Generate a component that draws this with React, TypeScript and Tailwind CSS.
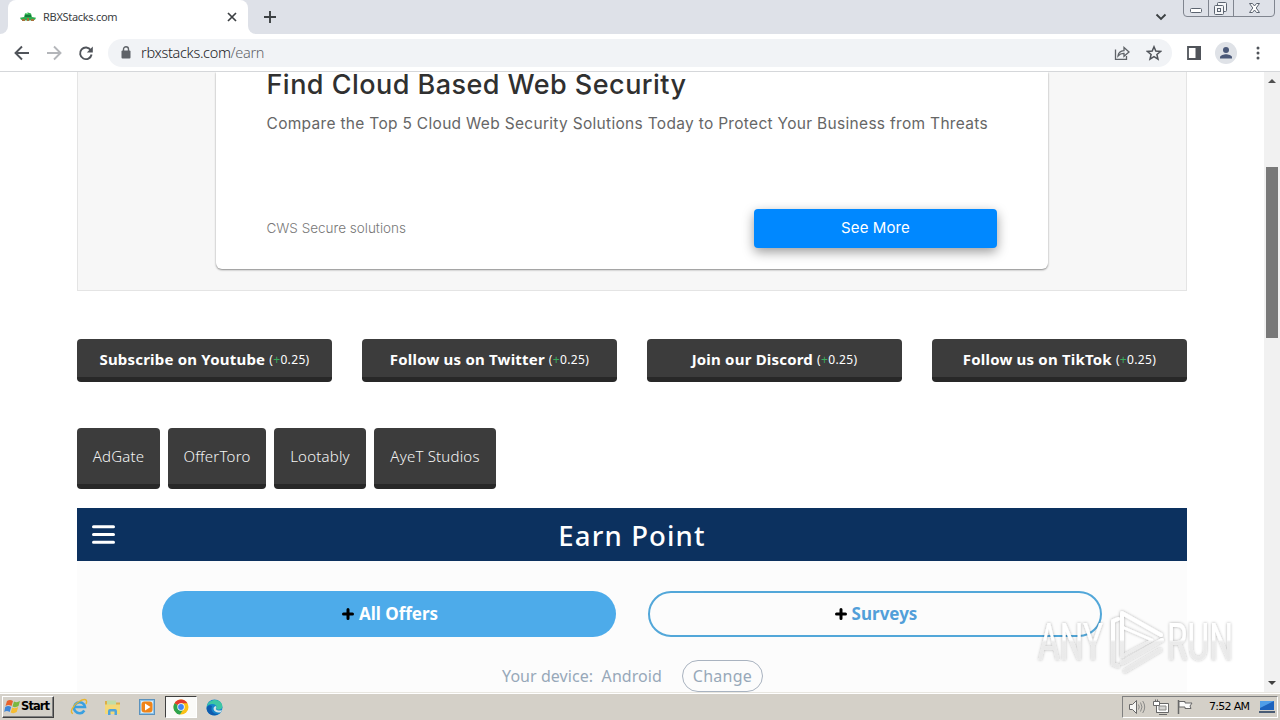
import React from "react";

const ui = "font-['Noto_Sans','Open_Sans',sans-serif]";

function TabStrip() {
  return (
    <div className="flex h-[34px] bg-[#dee1e8]">
      <div className="flex w-2 items-end bg-white">
        <div className="h-full w-full rounded-br-lg bg-[#dee1e8]" />
      </div>
      <div className="flex w-[240px] items-center rounded-t-lg bg-white pl-3 pr-[10px]">
        <svg width="16" height="10" viewBox="0 0 16 10">
          <path d="M4 5 5 1.500 8 .5l3 1L12 5l4 .8-1 2-7 1-7-1-1-2z" fill="#2fae4e" />
          <path d="M5 3h6v2H5z" fill="#137a3c" />
          <path d="M2 7h3v2H2zM7 6h2v3H7zM11 7h3v2h-3z" fill="#a8703c" />
          <path d="M6 1h2v1H6z" fill="#7ce08c" />
        </svg>
        <span className="ml-[7px] flex-1 whitespace-nowrap text-[11px] tracking-[-0.3px] text-[#3c4043]">RBXStacks.com</span>
        <svg width="12" height="12" viewBox="0 0 12 12" stroke="#3c4043" strokeWidth="1.7">
          <path d="M2 2l8 8M10 2l-8 8" />
        </svg>
      </div>
      <div className="w-2 bg-white">
        <div className="h-full w-full rounded-bl-lg bg-[#dee1e8]" />
      </div>
      <svg className="ml-2 mt-[11px]" width="12" height="12" viewBox="0 0 12 12" stroke="#3c4043" strokeWidth="1.9">
        <path d="M6 0v12M0 6h12" />
      </svg>
      <svg className="ml-auto mr-[15px] mt-[13px]" width="12" height="8" viewBox="0 0 12 8" fill="none" stroke="#3c4043" strokeWidth="1.9">
        <path d="M1.500 1.500 6 6l4.500-4.500" />
      </svg>
      <svg width="98" height="18" viewBox="0 0 98 18" fill="none" stroke="#80858f">
        <path d="M1.500 0v13q0 3.500 3.500 3.500h84q3.500 0 3.500-3.500V0M26.500 0v16M51.500 0v16" />
        <g stroke="#5c6470">
          <rect x="8.500" y="8.500" width="11" height="4" rx="1" fill="#fff" />
          <rect x="35.500" y="2.500" width="9" height="9" rx="1" fill="#f5f6f8" />
          <rect x="32.500" y="5.500" width="9" height="9" rx="1" fill="#f5f6f8" />
          <rect x="35.500" y="8.500" width="3" height="3" />
          <path d="M67.500 3.500h3l2 2.500 2-2.500h3L74.200 8l3.300 4.500h-3l-2-2.500-2 2.500h-3L70.800 8z" fill="#fff" />
        </g>
      </svg>
    </div>
  );
}

function Toolbar() {
  return (
    <div className="flex h-[38px] items-center border-b border-[#d5d7da] bg-white pl-[14px]">
      <svg width="80" height="16" viewBox="0 0 80 16" fill="none" strokeWidth="1.9">
        <path d="M15 8H2M8 1.500 1.500 8 8 14.500" stroke="#50545a" />
        <path d="M33 8h13M40 1.500 46.500 8 40 14.500" stroke="#b4b6ba" />
        <path d="M76.800 5.200A5.800 5.800 0 1 0 77.600 9.500" stroke="#50545a" />
        <path d="M78.800 1.500v6h-6z" fill="#50545a" />
      </svg>
      <div className="ml-[14px] flex h-[28px] w-[1064px] items-center rounded-full bg-[#f1f3f6] pl-[13px] pr-[10px]">
        <svg width="10" height="13" viewBox="0 0 10 13">
          <rect x="0.500" y="4.500" width="9" height="8" rx="1" fill="#5f6368" />
          <path d="M2.500 5V3.200a2.500 2.500 0 0 1 5 0V5" fill="none" stroke="#5f6368" strokeWidth="1.400" />
        </svg>
        <span className="ml-[10px] flex-1 whitespace-nowrap text-[14.500px] font-light tracking-[-0.32px] text-[#202124]">
          rbxstacks.com<span className="text-[#5f6368]">/earn</span>
        </span>
        <svg width="16" height="14" viewBox="0 0 16 14" fill="none" stroke="#5f6368" strokeWidth="1.300">
          <path d="M1.500 3.500v9.800h11V10" />
          <path d="M4 10q.5-5 6-5.400V1.500L15 6l-5 4.300V7.400Q6.500 7.200 4 10z" />
        </svg>
        <svg className="ml-4" width="16" height="16" viewBox="0 0 16 16" fill="none" stroke="#50545a" strokeWidth="1.500">
          <path d="m8 1.800 1.800 4.300 4.700.4-3.600 3 1.100 4.600L8 11.700 4 14.100l1.100-4.600-3.600-3 4.700-.4z" />
        </svg>
      </div>
      <svg className="ml-[15px]" width="14" height="14" viewBox="0 0 14 14">
        <path d="M1 1h12v12H1z" fill="none" stroke="#50545a" strokeWidth="1.800" />
        <path d="M8.500 0H14v14H8.500z" fill="#50545a" />
      </svg>
      <svg className="ml-[14px]" width="22" height="22" viewBox="0 0 22 22">
        <circle cx="11" cy="11" r="11" fill="#dfe2e7" />
        <circle cx="11" cy="8" r="3" fill="#4a5878" />
        <path d="M5 16.500v-1.300c0-2 4-3 6-3s6 1 6 3v1.300z" fill="#4a5878" />
      </svg>
      <svg className="ml-[19px]" width="4" height="14" viewBox="0 0 4 14" fill="#50545a">
        <circle cx="2" cy="2" r="1.500" />
        <circle cx="2" cy="7" r="1.500" />
        <circle cx="2" cy="12" r="1.500" />
      </svg>
    </div>
  );
}

function Ad() {
  return (
    <div className="flex h-[219px] justify-center border border-t-0 border-[#e4e4e4] bg-[#f7f7f7] pr-px">
      <div className="h-[197px] w-[832px] rounded-b-md bg-white px-[51px] font-['Inter',sans-serif] shadow-[0_1px_2px_rgba(0,0,0,0.45)]">
        <div className="h-[30px] whitespace-nowrap text-[27px] font-medium leading-[25px] tracking-[0.46px] text-[#303030]">Find Cloud Based Web Security</div>
        <div className="mt-3 h-5 whitespace-nowrap text-[15.500px] leading-5 tracking-[0.305px] text-[#666]">
          Compare the Top 5 Cloud Web Security Solutions Today to Protect Your Business from Threats
        </div>
        <div className="mt-[75px] flex h-[39px] items-center justify-between">
          <span className="text-[13.500px] font-light text-[#777]">CWS Secure solutions</span>
          <div className="flex h-[39px] w-[243px] items-center justify-center rounded bg-[#0088ff] text-[15px] tracking-[0.1px] text-white shadow-[0_4px_12px_rgba(0,0,0,0.4)]">
            <span className="ml-px">See More</span>
          </div>
        </div>
      </div>
    </div>
  );
}

function Social({ label }: { label: string }) {
  return (
    <div className="flex h-[43px] w-[255px] items-center justify-center whitespace-nowrap rounded border-b-[5px] border-[#282828] bg-[#3c3c3c] pt-[2px] text-[15px] font-bold text-white">
      <span className="tracking-[0.2px]">{label}</span>
      <span className="ml-1 mt-px text-[12px] font-normal tracking-[0.35px]">
        (<span className="text-[#3bab5c]">+</span>0.25)
      </span>
    </div>
  );
}

function Wall({ label, box }: { label: string; box: string }) {
  return (
    <div className={`flex h-[61px] items-center justify-center whitespace-nowrap rounded border-b-[5px] border-[#282828] bg-[#3c3c3c] text-[15px] font-light tracking-[0.2px] text-[#f4f4f4] ${box}`}>
      {label}
    </div>
  );
}

function Plus() {
  return (
    <svg className="mr-[5px]" width="12" height="12" viewBox="0 0 12 12" stroke="#000" strokeWidth="3" strokeLinecap="round">
      <path d="M6 1.500v9M1.500 6h9" />
    </svg>
  );
}

function OfferPanel() {
  return (
    <div className="mt-[19px] h-[184px] bg-[#fcfcfc]">
      <div className="flex h-[53px] items-center bg-[#0c315f] pl-[15px] pr-[38px]">
        <svg width="23" height="19" viewBox="0 0 23 19" stroke="#fff" strokeWidth="3" strokeLinecap="round">
          <path d="M1.500 1.700h20M1.500 9.500h20M1.500 17.300h20" />
        </svg>
        <span className="flex-1 pt-[2px] text-center text-[27.500px] font-medium tracking-[1.150px] text-white">Earn Point</span>
      </div>
      <div className="mt-[30px] flex justify-center gap-8 text-[17px] font-bold">
        <div className="flex h-[46px] w-[454px] items-center justify-center rounded-full bg-[#4dabea] pl-[2px] text-white">
          <Plus />
          <span>All Offers</span>
        </div>
        <div className="flex h-[46px] w-[454px] items-center justify-center rounded-full border-2 border-[#52a7d9] pl-[2px] text-[#529fd9]">
          <Plus />
          <span>Surveys</span>
        </div>
      </div>
      <div className="mt-[23px] flex items-center justify-center whitespace-nowrap pl-px text-[16px] text-[#97a8b9]">
        <span className="mr-5 tracking-[0.06px]">Your device:&nbsp; Android</span>
        <span className="flex h-8 w-[81px] items-center justify-center rounded-full border border-[#a9b3c0] tracking-[0.25px]">Change</span>
      </div>
    </div>
  );
}

function Scrollbar() {
  return (
    <div className="flex h-full w-4 flex-col items-center bg-[#f1f1f1]">
      <svg className="mt-[6px]" width="8" height="5" viewBox="0 0 8 5" fill="#505050">
        <path d="M0 5 4 1l4 4z" />
      </svg>
      <div className="mt-[84px] h-[171px] w-3 bg-[#797979]" />
      <svg className="mb-[6px] mt-auto" width="8" height="5" viewBox="0 0 8 5" fill="#404040">
        <path d="M0 0l4 4 4-4z" />
      </svg>
    </div>
  );
}

function Watermark() {
  return (
    <svg className="absolute left-[1030px] top-[604px]" width="210" height="76" viewBox="0 0 210 76">
      <defs>
        <linearGradient id="fade" x1="0" y1="0" x2="0" y2="76" gradientUnits="userSpaceOnUse">
          <stop offset="0" stopColor="#fff" />
          <stop offset="0.470" stopColor="#fff" />
          <stop offset="0.500" stopColor="#ededed" stopOpacity="0.850" />
          <stop offset="1" stopColor="#e9e9e9" stopOpacity="0.850" />
        </linearGradient>
        <filter id="halo" x="-10%" y="-10%" width="120%" height="120%">
          <feDropShadow dx="0" dy="0" stdDeviation="1.500" floodColor="#000" floodOpacity="0.330" />
        </filter>
      </defs>
      <g filter="url(#halo)" fill="url(#fade)" fontFamily="Roboto, sans-serif" fontSize="52">
        <text x="8" y="56" textLength="65" lengthAdjust="spacingAndGlyphs">ANY</text>
        <text x="137" y="56" textLength="66" lengthAdjust="spacingAndGlyphs">RUN</text>
        <g fill="none" stroke="url(#fade)" strokeWidth="4" strokeLinejoin="round" strokeLinecap="round">
          <path d="M92 52V9l39 22" />
          <path d="M92 23v29l30-16z" strokeWidth="2.500" />
          <path d="M88 15l-5 2v43l5 2M132 36 92 59" />
          <path d="M95 67l35-21" />
        </g>
      </g>
    </svg>
  );
}

function Taskbar() {
  return (
    <div className="flex h-7 items-center border-t border-[#e8e6e0] bg-[#d4d0c8] shadow-[inset_0_1px_0_#fff]">
      <div className="ml-[2px] mt-px flex h-[22px] w-[52px] items-center border border-b-[#404040] border-l-white border-r-[#404040] border-t-white pl-px shadow-[inset_-1px_-1px_0_#808080]">
        <svg width="17" height="16" viewBox="0 0 17 16">
          <path d="M3 2q3-2 6 0L7.500 7q-3-2-6 0z" fill="#e8622c" />
          <path d="M10 2.500q3 1.500 6-.5l-1.500 5q-3 2-6 .5z" fill="#7ab840" />
          <path d="M1.200 8q3-2 6 0L5.700 13q-3-2-5.500 0z" fill="#3f86d8" />
          <path d="M8.200 8.500q3 1.500 6-.5l-1.500 5q-3 2-6 .5z" fill="#f6bd32" />
        </svg>
        <span className="font-['DejaVu_Sans',sans-serif] text-[11.500px] font-bold tracking-[-0.9px] text-black">Start</span>
      </div>
      <svg className="ml-4 mt-px" width="18" height="18" viewBox="0 0 18 18" fill="none">
        <path d="M14.300 12.500a5.500 5.500 0 1 1 .7-3.500H5" stroke="#3aa0e0" strokeWidth="2.500" />
        <path d="M3 15.500C-1 15 3 7 9 3.500S18 1.500 16 6" stroke="#e9b62f" strokeWidth="1.400" />
      </svg>
      <svg className="ml-4 mt-px" width="17" height="17" viewBox="0 0 17 17">
        <path d="M1 2h5l1 1.500h9V15H1z" fill="#dcae48" />
        <path d="M3 1.500h9V7H3z" fill="#bfdca8" />
        <path d="M1 5.500h15V15H1z" fill="#f3d878" />
        <path d="M4 16v-4q0-2 2-2h5q2 0 2 2v4h-2.500v-3.500h-4V16z" fill="#4fa3da" />
      </svg>
      <svg className="ml-[18px] mt-px" width="16" height="16" viewBox="0 0 16 16">
        <rect x="0.500" y="0.500" width="15" height="15" fill="#8cc3ea" stroke="#5b92bd" />
        <rect x="2" y="2" width="12" height="12" fill="#d8ecf8" />
        <rect x="2.500" y="2.500" width="11" height="11" rx="3" fill="#f08418" />
        <path d="M6 4.500 11.500 8 6 11.500z" fill="#fff" />
      </svg>
      <div className="ml-[10px] mt-px flex h-[22px] w-8 items-center justify-center border border-b-white border-l-[#404040] border-r-white border-t-[#404040] bg-[#fafaf8]">
        <svg width="16" height="16" viewBox="0 0 16 16">
          <circle cx="8" cy="8" r="7.500" fill="#fbc116" />
          <path d="M8 8 1.500 4.200A7.500 7.500 0 0 1 14.500 4.300H8z" fill="#e33b2e" />
          <path d="M8 8 1.500 4.200A7.500 7.500 0 0 0 7 15.500L10.500 10z" fill="#2da44e" />
          <circle cx="8" cy="8" r="3.700" fill="#fff" />
          <circle cx="8" cy="8" r="2.900" fill="#4285f4" />
        </svg>
      </div>
      <svg className="ml-[9px] mt-px" width="17" height="17" viewBox="0 0 17 17">
        <circle cx="8.500" cy="8.500" r="8" fill="#1686cc" />
        <path d="M.6 8C2 1 9 0 12.500 1.700 16 3.500 17 7 16 9c-1 2-5 2-6 1 2-3-1-5-4-5S1 6.500.6 8z" fill="#3dc6a4" />
        <path d="M6 7.500c-2 4 2 8.500 7 7-5 4-12 1-12.500-5C1.500 6 5 5.500 6 7.500z" fill="#0f5cae" />
        <path d="M9.500 7c2 1 0 2 .5 3.200 1.500 1.800 4 1.500 6 .8l-1 2c-3 1.500-7 0-7.500-3 0-2 1-2.500 2-3z" fill="#d4e4e8" />
      </svg>
      <div className="ml-auto mr-[2px] mt-px flex h-[22px] w-[156px] items-center border border-b-white border-l-[#808080] border-r-white border-t-[#808080] pl-[5px]">
        <svg width="68" height="16" viewBox="0 0 68 16" fill="none" stroke="#686868">
          <path d="M1.500 5.500h3l4-4v13l-4-4h-3z" fill="#f6f6f4" />
          <path d="M10.500 5.500q1.500 2.500 0 5M12.500 3.500q3 4.500 0 9M14.700 2q4 6 0 12" stroke="#8a8a88" />
          <path d="M28.500 4.500h12v9h-12zM31 15.500h8" fill="#fff" />
          <path d="M31 7h7v4h-7z" fill="#d4d4d2" stroke="#8a8a88" />
          <path d="M25.500 2.500h6v4h-6zM28.500 6.500v7M27.500 .5v2M29.500 .5v2" fill="#fff" />
          <path d="M50.500 1v14" strokeWidth="1.500" />
          <path d="M51 2.500h6v1.500h7l-2 3 1 2.500h-6V8h-6z" fill="#fbfbfa" />
        </svg>
        <span className="ml-[13px] w-[45px] whitespace-nowrap font-['DejaVu_Sans',sans-serif] text-[11px] tracking-[-0.7px] text-black">7:52 AM</span>
        <svg className="ml-[5px]" width="16" height="14" viewBox="0 0 16 14">
          <path d="M1 1h14v9H1z" fill="#1c62bd" />
          <path d="M1 1h14L1 8z" fill="#4f9de8" />
          <path d="M0 11h16v2H0z" fill="#4a5c74" />
        </svg>
      </div>
    </div>
  );
}

export default function App() {
  return (
    <div className={`relative flex h-[720px] w-[1280px] flex-col overflow-hidden bg-white ${ui}`}>
      <TabStrip />
      <Toolbar />
      <div className="flex h-[620px]">
        <main className="flex-1 overflow-hidden pl-[77px] pr-[77px]">
          <Ad />
          <div className="mt-12 flex justify-between">
            <Social label="Subscribe on Youtube" />
            <Social label="Follow us on Twitter" />
            <Social label="Join our Discord" />
            <Social label="Follow us on TikTok" />
          </div>
          <div className="mt-[46px] flex gap-2">
            <Wall label="AdGate" box="w-[83px]" />
            <Wall label="OfferToro" box="w-[98px]" />
            <Wall label="Lootably" box="w-[92px]" />
            <Wall label="AyeT Studios" box="w-[122px]" />
          </div>
          <OfferPanel />
        </main>
        <Scrollbar />
      </div>
      <Taskbar />
      <Watermark />
    </div>
  );
}
